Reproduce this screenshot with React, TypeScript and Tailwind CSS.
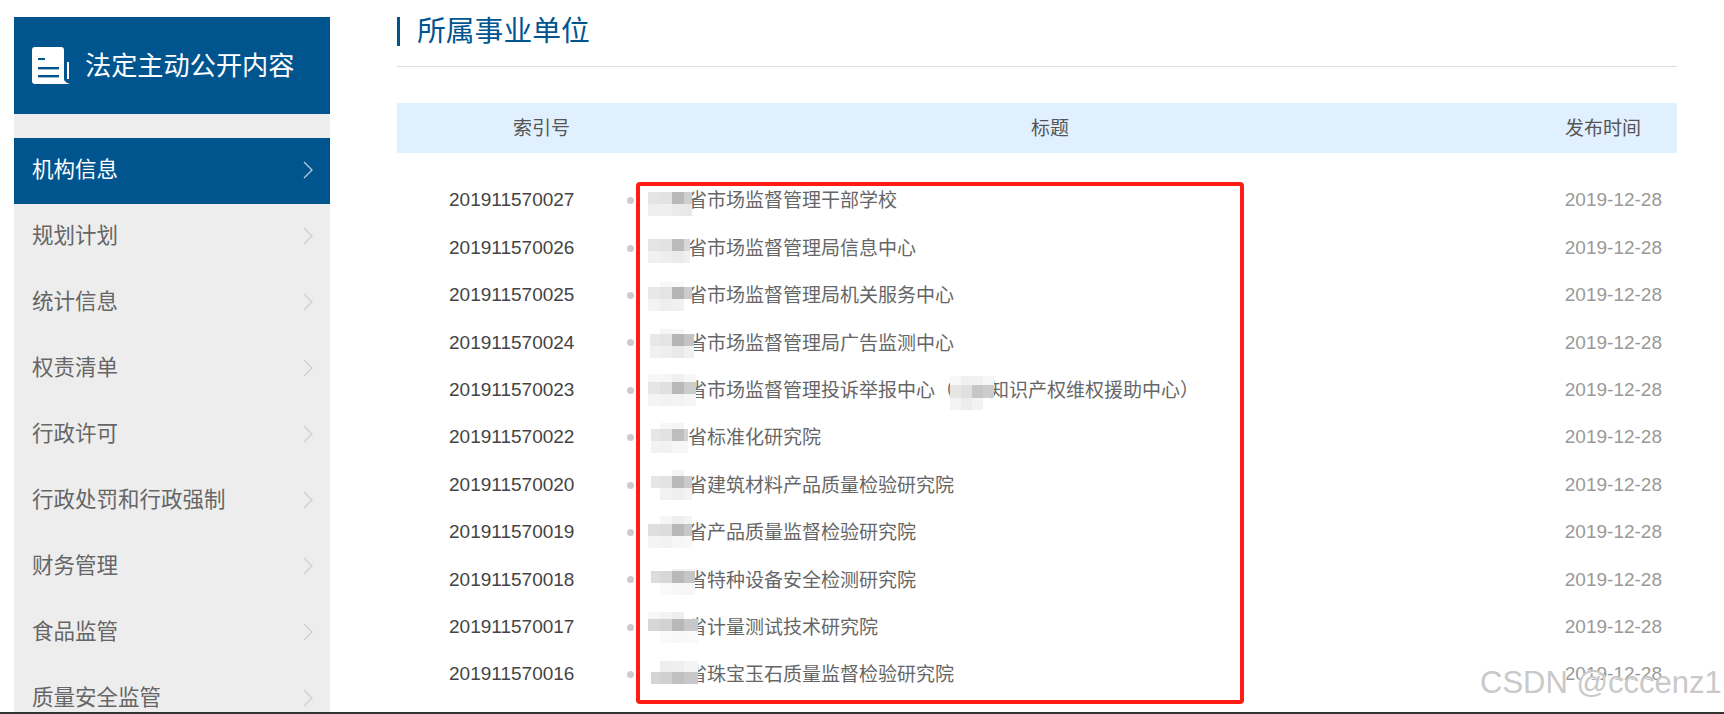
const FONT = '[font-family:"Liberation_Sans","Noto_Sans_CJK_SC",sans-serif]';

const menu = [
  '机构信息',
  '规划计划',
  '统计信息',
  '权责清单',
  '行政许可',
  '行政处罚和行政强制',
  '财务管理',
  '食品监管',
  '质量安全监管',
];

type Blur = {
  left: number;
  w4?: number;
  topH?: number;
  dy?: number;
  top?: string[];
  mid: string[];
  bot?: string[];
};

type Row = {
  id: string;
  title: React.ReactNode;
  blur: Blur;
};

const T = 'transparent';

const rows: Row[] = [
  {
    id: '201911570027',
    title: '省市场监督管理干部学校',
    blur: { left: 648, mid: ['#e4e4e4', '#e2e2e2', '#b9b9b9', '#cfcfcf'], bot: ['#efefef', '#efefef', '#eaeaea', '#e9e9e9'] },
  },
  {
    id: '201911570026',
    title: '省市场监督管理局信息中心',
    blur: { left: 648, w4: 6, mid: ['#e4e4e4', '#e2e2e2', '#bbbbbb', '#d8d8d8'], bot: ['#f1f1f1', '#eeeeee', '#ebebeb', '#f0f0f0'] },
  },
  {
    id: '201911570025',
    title: '省市场监督管理局机关服务中心',
    blur: { left: 648, topH: 5, top: [T, '#f8f8f8', '#f9f9f9', T], mid: ['#e8e8e8', '#e4e4e4', '#b5b5b5', '#cccccc'], bot: ['#f3f3f3', '#eeeeee', '#f1f1f1', T] },
  },
  {
    id: '201911570024',
    title: '省市场监督管理局广告监测中心',
    blur: { left: 650, w4: 10, topH: 5, top: [T, '#f5f5f5', '#f7f7f7', T], mid: ['#e8e8e8', '#e4e4e4', '#b5b5b5', '#c4c4c4'], bot: ['#f1f1f1', '#eeeeee', '#e9e9e9', '#f0f0f0'] },
  },
  {
    id: '201911570023',
    title: (
      <>
        省市场监督管理投诉举报中心（
        <span className="relative inline-block w-[36px]">
          <span className="absolute left-[-4px] top-[-1px] grid grid-cols-[11px_11px_11px_11px]">
            <span className="h-[9px] bg-[#f8f8f8]" />
            <span className="h-[9px] bg-[#f0f0f0]" />
            <span className="h-[9px] bg-[#f1f1f1]" />
            <span className="h-[9px] bg-[#f6f6f6]" />
            <span className="h-[13px] bg-[#e6e6e6]" />
            <span className="h-[13px] bg-[#e0e0e0]" />
            <span className="h-[13px] bg-[#c6c6c6]" />
            <span className="h-[13px] bg-[#cccccc]" />
            <span className="h-[12px] bg-[#f3f3f3]" />
            <span className="h-[12px] bg-[#ececec]" />
            <span className="h-[12px] bg-[#f2f2f2]" />
            <span className="h-[12px]" />
          </span>
          &nbsp;
        </span>
        知识产权维权援助中心）
      </>
    ),
    blur: { left: 648, w4: 12, topH: 8, top: ['#f7f7f7', '#f6f6f6', '#f0f0f0', '#f7f7f7'], mid: ['#e6e6e6', '#e0e0e0', '#b9b9b9', '#cccccc'], bot: ['#f4f4f4', '#f2f2f2', '#f3f3f3', '#f5f5f5'] },
  },
  {
    id: '201911570022',
    title: '省标准化研究院',
    blur: { left: 651, w4: 4, topH: 6, top: [T, '#f7f7f7', '#f5f5f5', T], mid: ['#e6e6e6', '#e2e2e2', '#bdbdbd', '#d2d2d2'], bot: ['#f3f3f3', '#f2f2f2', '#f6f6f6', '#f6f6f6'] },
  },
  {
    id: '201911570020',
    title: '省建筑材料产品质量检验研究院',
    blur: { left: 651, topH: 6, top: [T, T, '#f4f4f4', T], mid: ['#e6e6e6', '#e3e3e3', '#b9b9b9', '#cbcbcb'], bot: [T, '#f2f2f2', '#efefef', '#f3f3f3'] },
  },
  {
    id: '201911570019',
    title: '省产品质量监督检验研究院',
    blur: { left: 648, topH: 8, top: [T, '#f6f6f6', '#eeeeee', '#f3f3f3'], mid: ['#dedede', '#dcdcdc', '#b8b8b8', '#c8c8c8'], bot: ['#f4f4f4', '#f2f2f2', '#f6f6f6', '#f8f8f8'] },
  },
  {
    id: '201911570018',
    title: '省特种设备安全检测研究院',
    blur: { left: 651, w4: 11, topH: 2, top: [T, T, '#f3f3f3', '#f5f5f5'], mid: ['#dcdcdc', '#d8d8d8', '#b9b9b9', '#c6c6c6'], bot: [T, '#fafafa', '#f7f7f7', '#f6f6f6'] },
  },
  {
    id: '201911570017',
    title: '省计量测试技术研究院',
    blur: { left: 648, w4: 14, topH: 7, top: ['#f7f7f7', '#f3f3f3', '#eeeeee', T], mid: ['#d6d6d6', '#d2d2d2', '#b8b8b8', '#c8c8c8'], bot: [T, '#fafafa', '#f8f8f8', '#f9f9f9'] },
  },
  {
    id: '201911570016',
    title: '省珠宝玉石质量监督检验研究院',
    blur: { left: 651, w4: 14, topH: 11, dy: 6, top: [T, '#eeeeee', '#efefef', '#f4f4f4'], mid: ['#d4d4d4', '#d0d0d0', '#c0c0c0', '#c8c8c8'] },
  },
];

function Chevron({ active }: { active: boolean }) {
  return (
    <svg width="10" height="18" viewBox="0 0 10 18" fill="none" className="shrink-0">
      <polyline
        points="1,1 9,9 1,17"
        stroke={active ? '#b4cbdd' : '#cfcfcf'}
        strokeWidth="1.3"
      />
    </svg>
  );
}

function BookIcon() {
  return (
    <svg width="38" height="37" viewBox="0 0 38 37" className="shrink-0">
      <path
        d="M3 0H29a3 3 0 0 1 3 3V32q0 3 6 5H3a3 3 0 0 1-3-3V3a3 3 0 0 1 3-3Z"
        fill="#ffffff"
      />
      <rect x="6" y="11" width="7" height="2" fill="#00558f" />
      <rect x="6" y="20" width="21" height="2.4" fill="#00558f" />
      <rect x="6" y="28" width="21" height="2.4" fill="#00558f" />
      <rect x="35" y="15" width="2" height="17" fill="#ffffff" />
    </svg>
  );
}

function Mosaic({ blur }: { blur: Blur }) {
  const topH = blur.topH ?? 0;
  const cells = [...(blur.top ?? [T, T, T, T]), ...blur.mid, ...(blur.bot ?? [T, T, T, T])];
  const first = 12 - (blur.left - 648);
  return (
    <div
      className="absolute grid"
      style={{
        left: blur.left - 397,
        top: 15 - topH + (blur.dy ?? 0),
        gridTemplateColumns: `${first}px 12px 12px ${blur.w4 ?? 8}px`,
        gridTemplateRows: `${topH}px 12px 12px`,
      }}
    >
      {cells.map((c, i) => (
        <span key={i} style={{ background: c }} />
      ))}
    </div>
  );
}

function Sidebar() {
  return (
    <aside className="ml-[14px] mt-[17px] flex w-[316px] shrink-0 flex-col overflow-hidden bg-[#ededed]">
      <div className="flex h-[97px] shrink-0 items-center gap-[15px] bg-[#00558f] pl-[18px] text-[26.2px] text-white">
        <BookIcon />
        <span className="mt-[2px]">法定主动公开内容</span>
      </div>
      <ul className="mt-[24px] shrink-0">
        {menu.map((item, i) => (
          <li
            key={item}
            className={`flex h-[66px] items-center justify-between pb-[2px] pl-[18px] pr-[17px] text-[21.5px] ${
              i === 0 ? 'bg-[#00558f] text-white' : 'text-[#666666]'
            }`}
          >
            <span>{item}</span>
            <Chevron active={i === 0} />
          </li>
        ))}
      </ul>
    </aside>
  );
}

export default function App() {
  return (
    <div className={`relative flex h-[714px] w-[1724px] flex-col overflow-hidden bg-white ${FONT}`}>
      <div className="flex min-h-0 flex-1">
        <Sidebar />
        <main className="ml-[67px] w-[1280px] pt-[17px]">
          <div className="border-b border-[#dddddd] pb-[20px]">
            <h1 className="border-l-[3px] border-[#00558f] pl-[17px] text-[28.8px] leading-[29px] text-[#00558f]">
              所属事业单位
            </h1>
          </div>
          <div className="mt-[36px] flex h-[50px] items-center bg-[#e0f0fe] pt-[2px] text-[19px] text-[#555555]">
            <span className="w-[173px] text-right">索引号</span>
            <span className="w-[960px] text-center">标题</span>
            <span className="pl-[35px]">发布时间</span>
          </div>
          <div className="relative mt-[24px]">
            {rows.map((row) => (
              <div key={row.id} className="relative flex h-[47.4px] items-center">
                <span className="ml-[52px] w-[125px] text-[19px] text-[#444444]">{row.id}</span>
                <span className="ml-[53px] h-[7px] w-[7px] rounded-full bg-[#cccccc]" />
                <span className="ml-[54px] mt-[2px] flex-1 text-[19px] text-[#666666]">{row.title}</span>
                <Mosaic blur={row.blur} />
                <span className="mr-[15px] text-[19px] text-[#999999]">2019-12-28</span>
              </div>
            ))}
          </div>
        </main>
      </div>
      <div className="h-[2px] shrink-0 bg-[#333333]" />

      {/* screenshot annotation */}
      <div className="absolute left-[636px] top-[182px] h-[522px] w-[608px] rounded-[4px] border-4 border-[#ff1c14]" />
      <div className="absolute left-[1480px] top-[663px] text-[31px] leading-[40px] text-[#c9c9c9] [text-shadow:1px_1px_0_#ffffff]">
        CSDN @cccenz1
      </div>
    </div>
  );
}
